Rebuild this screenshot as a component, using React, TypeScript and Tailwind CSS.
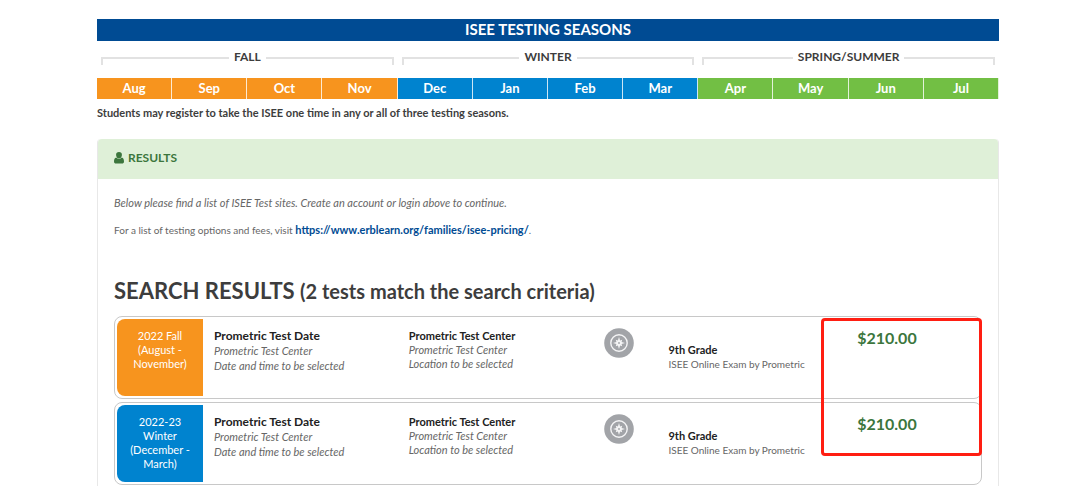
const seasons = [
  { name: "FALL", color: "bg-[#f7941e]", months: ["Aug", "Sep", "Oct", "Nov"] },
  { name: "WINTER", color: "bg-[#0083cf]", months: ["Dec", "Jan", "Feb", "Mar"] },
  { name: "SPRING/SUMMER", color: "bg-[#72bf44]", months: ["Apr", "May", "Jun", "Jul"] },
];

const results = [
  { lines: ["2022 Fall", "(August -", "November)"], color: "bg-[#f7941e]", price: "$210.00" },
  { lines: ["2022-23", "Winter", "(December -", "March)"], color: "bg-[#0083cf]", price: "$210.00" },
];

function UserIcon() {
  return (
    <svg viewBox="0 0 10 12" className="h-3 w-[10px]" fill="currentColor" aria-hidden="true">
      <path d="M5 0a2.9 2.9 0 0 0-2.9 3.1C2.1 5 3.3 6.6 5 6.6S7.9 5 7.9 3.1A2.9 2.9 0 0 0 5 0Z" />
      <path d="M2.2 5.5C.7 5.9 0 7.300 0 9.400 0 10.800.8 11.600 2 11.600h6c1.200 0 2-.8 2-2.200 0-2.100-.7-3.500-2.200-3.900A3.900 3.900 0 0 1 5 7a3.900 3.900 0 0 1-2.800-1.500Z" />
    </svg>
  );
}

function CompassIcon() {
  return (
    <svg viewBox="0 0 30 30" className="size-[30px]" aria-hidden="true">
      <circle cx="15" cy="15" r="14.8" fill="#a2a4a8" />
      <circle cx="15" cy="15" r="8.200" fill="none" stroke="#f4f4f5" strokeWidth="1.400" />
      <path
        d="M15 9l1.100 3.400 2.100-.6-.6 2.100L21 15l-3.400 1.100.6 2.100-2.100-.6L15 21l-1.100-3.400-2.100.6.6-2.100L9 15l3.400-1.100-.6-2.100 2.100.6Z"
        fill="#f4f4f5"
      />
      <circle cx="15" cy="15" r=".9" fill="#a2a4a8" />
    </svg>
  );
}

export default function App() {
  return (
    <main className="bg-white pt-[19px] pr-[81px] pl-[97px] font-['Lato',sans-serif] text-[11px] leading-[15px] text-[#666666]">
      <section>
        <h1 className="h-[22px] bg-[#004b93] text-center text-[15px] leading-[21px] font-bold text-white">
          ISEE TESTING SEASONS
        </h1>
        <div className="grid grid-cols-3">
          {seasons.map((season) => (
            <div key={season.name}>
              <div className="flex h-[37px] items-start px-1 pt-[7px]">
                <span className="mt-[9px] h-2 flex-1 border-t-2 border-l-2 border-[#e2e2e2]" />
                <h2 className="px-[5px] text-[12px] leading-[18px] font-bold text-[#3d3d3d]">{season.name}</h2>
                <span className="mt-[9px] h-2 flex-1 border-t-2 border-r-2 border-[#e2e2e2]" />
              </div>
              <div className="grid grid-cols-4">
                {season.months.map((month) => (
                  <span
                    key={month}
                    className={`${season.color} h-[21px] border-r border-white/80 text-center text-[13px] leading-5 font-bold text-white`}
                  >
                    {month}
                  </span>
                ))}
              </div>
            </div>
          ))}
        </div>
        <p className="pt-[6px] text-[11px] leading-[15px] font-bold text-[#3d3d3d]">
          Students may register to take the ISEE one time in any or all of three testing seasons.
        </p>
      </section>

      <section className="mt-[19px] rounded-t border-x border-[#e8e8e8]">
        <h2 className="flex h-10 items-center gap-1 rounded-t bg-[#dff0d8] px-4 pb-[3px] text-[12px] font-bold text-[#3c763d]">
          <UserIcon />
          RESULTS
        </h2>
        <div className="px-4 pt-4 pb-4">
          <p className="text-[11px] leading-[15px] italic">
            Below please find a list of ISEE Test sites. Create an account or login above to continue.
          </p>
          <p className="pt-3 text-[10px] leading-[15px]">
            For a list of testing options and fees, visit{" "}
            <a href="https://www.erblearn.org/families/isee-pricing/" className="text-[11px] font-bold text-[#004b93]">
              https://www.erblearn.org/families/isee-pricing/
            </a>
            .
          </p>
          <h2 className="pt-[37px] text-[22px] leading-8 font-bold text-[#3d3d3d]">
            SEARCH RESULTS <span className="text-[20px]">(2 tests match the search criteria)</span>
          </h2>

          <div className="relative mt-[9px]">
            <ul className="flex flex-col gap-[3px]">
              {results.map((result) => (
                <li
                  key={result.lines[0]}
                  className="grid min-h-[83px] grid-cols-[86px_195fr_193fr_67fr_162fr_160fr] rounded-lg border border-[#c8c8c8] p-[2px] leading-[14px]"
                >
                  <div className={`${result.color} rounded-l-lg pt-[10px] pb-2 text-center text-white`}>
                    {result.lines.map((line) => (
                      <p key={line}>{line}</p>
                    ))}
                  </div>
                  <div className="pt-[9px] pl-[11px] leading-[15px] italic">
                    <h3 className="text-[12px] leading-[15px] font-bold text-[#222222] not-italic">Prometric Test Date</h3>
                    <p>Prometric Test Center</p>
                    <p>Date and time to be selected</p>
                  </div>
                  <div className="pt-[10px] pl-[11px] italic">
                    <h3 className="font-bold text-[#222222] not-italic">Prometric Test Center</h3>
                    <p>Prometric Test Center</p>
                    <p>Location to be selected</p>
                  </div>
                  <div className="pt-[9px] pl-[13px]">
                    <CompassIcon />
                  </div>
                  <div className="pt-6 pl-[11px] whitespace-nowrap">
                    <h3 className="font-bold text-[#222222]">9th Grade</h3>
                    <p className="text-[10px]">ISEE Online Exam by Prometric</p>
                  </div>
                  <p className="pt-[9px] pl-[38px] text-[16px] leading-5 font-bold text-[#3c763d]">{result.price}</p>
                </li>
              ))}
            </ul>
            <div className="pointer-events-none absolute top-[2px] right-0 h-[138px] w-[161px] rounded-sm border-3 border-[#ff1e12]" />
          </div>
        </div>
      </section>
    </main>
  );
}
